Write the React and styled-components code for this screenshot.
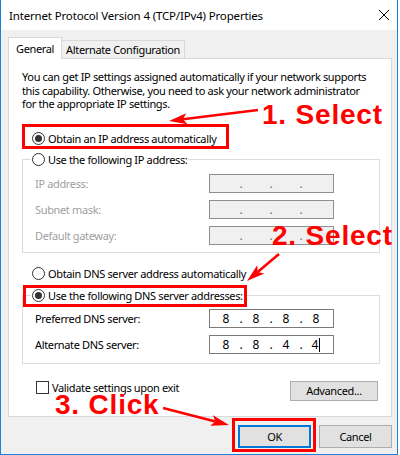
import React from "react";
import styled, { createGlobalStyle } from "styled-components";

const GlobalStyle = createGlobalStyle`
  html, body {
    margin: 0;
    padding: 0;
    background: #fff;
  }
  body {
    font-family: "Noto Sans", "Liberation Sans", sans-serif;
  }
`;

const Stage = styled.div`
  position: relative;
  width: 400px;
  height: 455px;
  overflow: hidden;
`;

const Window = styled.div`
  box-sizing: border-box;
  width: 398px;
  height: 455px;
  border: 1px solid #1883d7;
  border-top: none;
  display: flex;
  flex-direction: column;
  font-family: "Noto Sans", "Liberation Sans", sans-serif;
  font-size: 11px;
  letter-spacing: -0.35px;
  color: #000;
`;

const TitleBar = styled.div`
  height: 30px;
  flex: none;
  display: flex;
  align-items: center;
  justify-content: space-between;
  padding: 0 8px;
  background: #fff;
`;

const Title = styled.div`
  font-size: 11.5px;
  letter-spacing: -0.16px;
  white-space: nowrap;
`;

const Body = styled.div`
  flex: 1;
  display: flex;
  flex-direction: column;
  background: #f0f0f0;
  padding: 7px 5px 0 7px;
`;

const TabList = styled.div`
  display: flex;
  align-items: flex-end;
  height: 21px;
`;

const Tab = styled.div`
  box-sizing: border-box;
  display: flex;
  align-items: center;
  height: ${(p) => (p.$active ? "22px" : "18px")};
  margin-bottom: ${(p) => (p.$active ? "-1px" : "0")};
  padding: 0 ${(p) => (p.$active ? "7px" : "4px")};
  background: ${(p) => (p.$active ? "#fff" : "#f0f0f0")};
  border: 1px solid #d9d9d9;
  border-bottom: none;
  border-left: ${(p) => (p.$active ? "1px solid #d9d9d9" : "none")};
  position: relative;
  z-index: ${(p) => (p.$active ? 1 : 0)};
  white-space: nowrap;
`;

const Panel = styled.div`
  box-sizing: border-box;
  height: 359px;
  display: flex;
  flex-direction: column;
  background: #fff;
  border: 1px solid #d9d9d9;
  padding: 11px 11px 0 13px;
`;

const Intro = styled.p`
  margin: 0;
  line-height: 13.5px;
  white-space: nowrap;
`;

const RadioLabel = styled.label`
  display: flex;
  align-items: center;
  gap: 3px;
  height: 16px;
  margin-top: ${(p) => p.$mt || 0}px;
  padding-left: ${(p) => (p.$inset ? "10px" : "0")};
  white-space: nowrap;
`;

const RadioDot = styled.span`
  box-sizing: border-box;
  width: 13px;
  height: 13px;
  border: 1px solid #333;
  border-radius: 50%;
  background: #fff;
  display: flex;
  align-items: center;
  justify-content: center;

  &::after {
    content: "";
    width: 7px;
    height: 7px;
    border-radius: 50%;
    background: #333;
    display: ${(p) => (p.$checked ? "block" : "none")};
  }
`;

const GroupBox = styled.fieldset`
  margin: ${(p) => p.$mt}px 0 0;
  padding: ${(p) => p.$pt}px 12px ${(p) => p.$pb}px;
  border: 1px solid #dcdcdc;
  min-width: 0;
  display: flex;
  flex-direction: column;
  gap: 7px;
`;

const Legend = styled.legend`
  margin-left: -4px;
  padding: 0 1px;
  background: #fff;
`;

const FieldRow = styled.div`
  display: flex;
  align-items: center;
  height: 19px;
`;

const FieldLabel = styled.span`
  width: 174px;
  color: ${(p) => (p.$disabled ? "#a0a0a0" : "#000")};
  white-space: nowrap;
`;

const IpBox = styled.div`
  box-sizing: border-box;
  width: 125px;
  height: 19px;
  display: flex;
  align-items: center;
  padding-left: 5px;
  border: 1px solid ${(p) => (p.$disabled ? "#8e8e8e" : "#7a7a7a")};
  background: ${(p) => (p.$disabled ? "#f0f0f0" : "#fff")};
  font-size: 12px;
  letter-spacing: 0;
`;

const Octet = styled.span`
  width: 22px;
  text-align: center;
`;

const Dot = styled.span`
  width: 8px;
  text-align: center;
  color: ${(p) => (p.$disabled ? "#6f6f90" : "#000")};
`;

const Caret = styled.span`
  display: inline-block;
  width: 1px;
  height: 14px;
  margin-left: 1px;
  background: #000;
  vertical-align: middle;
`;

const BottomRow = styled.div`
  display: flex;
  justify-content: space-between;
  align-items: flex-start;
  margin-top: 17px;
  padding: 0 2px 0 14px;
`;

const CheckLabel = styled.label`
  display: flex;
  align-items: center;
  gap: 3px;
  height: 13px;
  white-space: nowrap;
`;

const CheckBox = styled.span`
  box-sizing: border-box;
  width: 13px;
  height: 13px;
  border: 1px solid #333;
  background: #fff;
`;

const Button = styled.button`
  box-sizing: border-box;
  width: ${(p) => p.$w}px;
  height: ${(p) => p.$h}px;
  padding: 0;
  font-family: inherit;
  font-size: 11px;
  letter-spacing: inherit;
  color: #000;
  background: #e1e1e1;
  border: 1px solid ${(p) => (p.$default ? "#0078d7" : "#adadad")};
  box-shadow: ${(p) => (p.$default ? "inset 0 0 0 1px #0078d7" : "none")};
`;

const Footer = styled.div`
  display: flex;
  justify-content: flex-end;
  gap: 8px;
  padding-top: 8px;
`;

const Overlay = styled.svg`
  position: absolute;
  left: 0;
  top: 0;
  pointer-events: none;
`;

const Callout = styled.div`
  position: absolute;
  left: ${(p) => p.$x}px;
  top: ${(p) => p.$y}px;
  font-family: "Liberation Sans", Arial, sans-serif;
  font-weight: bold;
  font-size: 28px;
  line-height: 28px;
  letter-spacing: 0.8px;
  color: #f00;
  white-space: nowrap;
  pointer-events: none;
`;

const Radio = ({ checked, children, ...rest }) => (
  <RadioLabel {...rest}>
    <RadioDot $checked={checked} />
    {children}
  </RadioLabel>
);

const IpField = ({ label, value, disabled, caret }) => {
  const parts = value || ["", "", "", ""];
  return (
    <FieldRow>
      <FieldLabel $disabled={disabled}>{label}</FieldLabel>
      <IpBox $disabled={disabled}>
        {parts.map((part, i) => (
          <React.Fragment key={i}>
            <Octet>
              {part}
              {caret && i === 3 && <Caret />}
            </Octet>
            {i < 3 && <Dot $disabled={disabled}>.</Dot>}
          </React.Fragment>
        ))}
      </IpBox>
    </FieldRow>
  );
};

const Arrow = ({ from, to }) => {
  const [x1, y1] = from;
  const [x2, y2] = to;
  const len = Math.hypot(x1 - x2, y1 - y2);
  const ux = (x1 - x2) / len;
  const uy = (y1 - y2) / len;
  const head = 18;
  const half = 5.5;
  const bx = x2 + ux * head;
  const by = y2 + uy * head;
  const nx = x2 + ux * (head - 4);
  const ny = y2 + uy * (head - 4);
  const points = [
    [x2, y2],
    [bx - uy * half, by + ux * half],
    [nx, ny],
    [bx + uy * half, by - ux * half],
  ]
    .map((p) => p.join(","))
    .join(" ");
  return (
    <g>
      <line x1={x1} y1={y1} x2={nx} y2={ny} stroke="#f00" strokeWidth="2.5" />
      <polygon points={points} fill="#f00" />
    </g>
  );
};

export default function App() {
  return (
    <>
      <GlobalStyle />
      <Stage>
        <Window>
          <TitleBar>
            <Title>Internet Protocol Version 4 (TCP/IPv4) Properties</Title>
            <svg width="10" height="10" viewBox="0 0 10 10">
              <path d="M0 0 L10 10 M10 0 L0 10" stroke="#000" strokeWidth="1" />
            </svg>
          </TitleBar>
          <Body>
            <TabList>
              <Tab $active>General</Tab>
              <Tab>Alternate Configuration</Tab>
            </TabList>
            <Panel>
              <Intro>
                You can get IP settings assigned automatically if your network supports
                <br />
                this capability. Otherwise, you need to ask your network administrator
                <br />
                for the appropriate IP settings.
              </Intro>
              <Radio checked $inset $mt={20}>
                Obtain an IP address automatically
              </Radio>
              <GroupBox $mt={5} $pt={6} $pb={7}>
                <Legend>
                  <Radio>Use the following IP address:</Radio>
                </Legend>
                <IpField label="IP address:" disabled />
                <IpField label="Subnet mask:" disabled />
                <IpField label="Default gateway:" disabled />
              </GroupBox>
              <Radio $inset $mt={13}>
                Obtain DNS server address automatically
              </Radio>
              <GroupBox $mt={6} $pt={5} $pb={9}>
                <Legend>
                  <Radio checked>Use the following DNS server addresses:</Radio>
                </Legend>
                <IpField label="Preferred DNS server:" value={["8", "8", "8", "8"]} />
                <IpField label="Alternate DNS server:" value={["8", "8", "4", "4"]} caret />
              </GroupBox>
              <BottomRow>
                <CheckLabel>
                  <CheckBox />
                  Validate settings upon exit
                </CheckLabel>
                <Button $w={88} $h={20}>
                  Advanced...
                </Button>
              </BottomRow>
            </Panel>
            <Footer>
              <Button $w={73} $h={23} $default>
                OK
              </Button>
              <Button $w={73} $h={23}>
                Cancel
              </Button>
            </Footer>
          </Body>
        </Window>

        <Overlay width="400" height="455" viewBox="0 0 400 455">
          <g fill="none" stroke="#f00" strokeWidth="3">
            <rect x="23.5" y="125.5" width="204" height="22" />
            <rect x="24.5" y="286.5" width="221" height="19" />
            <rect x="233.5" y="419.5" width="81" height="31" />
          </g>
          <Arrow from={[258, 110]} to={[169, 121]} />
          <Arrow from={[279, 254]} to={[247, 281]} />
          <Arrow from={[163, 408]} to={[229, 425]} />
        </Overlay>
        <Callout $x={262} $y={101}>1. Select</Callout>
        <Callout $x={272} $y={222}>2. Select</Callout>
        <Callout $x={55} $y={391}>3. Click</Callout>
      </Stage>
    </>
  );
}
